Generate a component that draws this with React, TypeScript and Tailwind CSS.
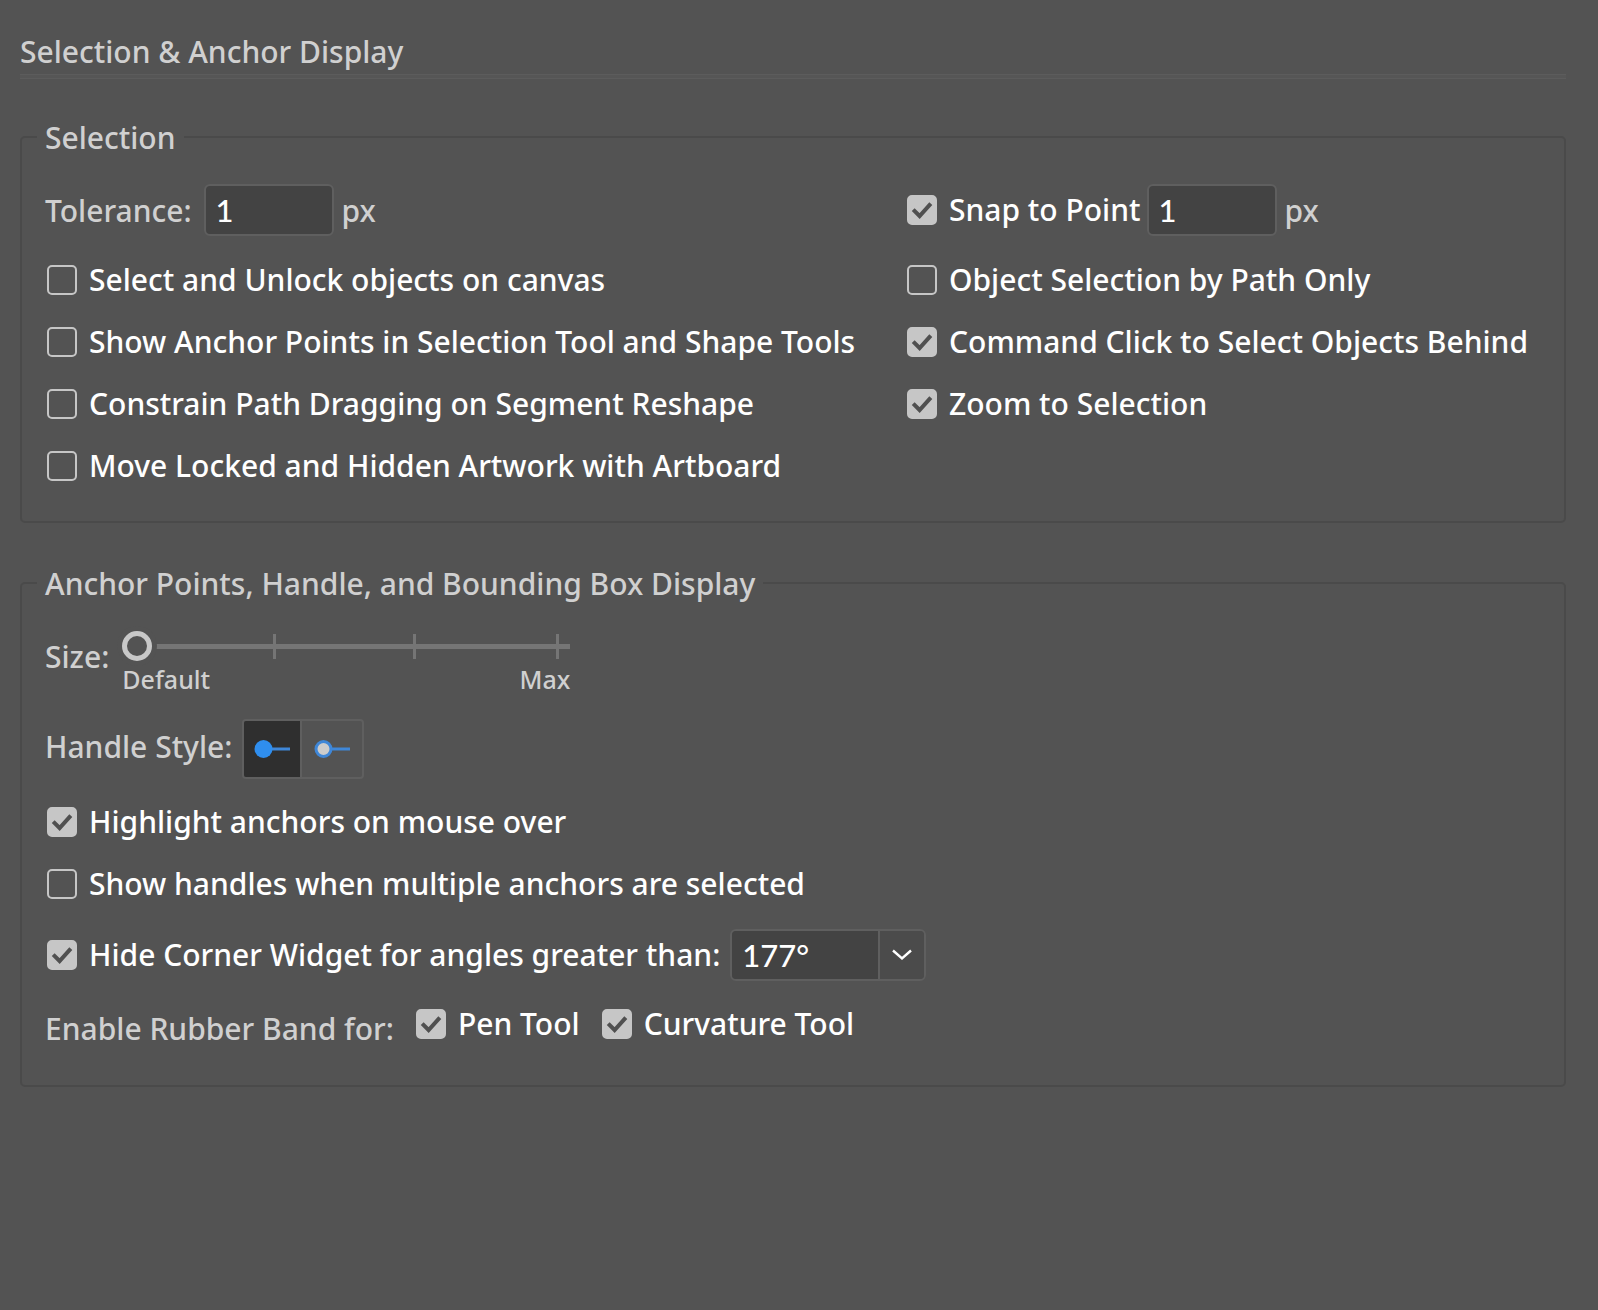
import { useState } from "react";
import type { ReactNode } from "react";

function Checkbox({ label, on = false }: { label: string; on?: boolean }) {
  const [checked, setChecked] = useState(on);
  return (
    <label className="flex h-[30px] items-center gap-3 whitespace-nowrap text-white">
      <span className="grid shrink-0">
        <input
          type="checkbox"
          checked={checked}
          onChange={(e) => setChecked(e.target.checked)}
          className="peer col-start-1 row-start-1 size-[30px] appearance-none rounded-[5px] border-2 border-[#c6c6c6] checked:bg-[#c6c6c6]"
        />
        <svg
          viewBox="0 0 30 30"
          className="pointer-events-none invisible col-start-1 row-start-1 size-[30px] peer-checked:visible"
          fill="none"
          stroke="#505050"
          strokeWidth="4"
        >
          <path d="M6.2 14.6 L12.6 21 L23.8 8.6" />
        </svg>
      </span>
      <span>{label}</span>
    </label>
  );
}

function Group({ title, children }: { title: string; children: ReactNode }) {
  return (
    <fieldset className="min-w-0 rounded-[5px] border-2 border-[#4a4a4a] pr-6 pl-[23px]">
      <legend className="-ml-2 px-2 pt-[2px] leading-10">{title}</legend>
      {children}
    </fieldset>
  );
}

function PixelField({ id, name }: { id: string; name?: string }) {
  return (
    <input
      id={id}
      type="text"
      defaultValue="1"
      aria-label={name}
      className="mr-2 h-[52px] w-[130px] rounded-[6px] border-2 border-[#5f5f5f] bg-[#434343] px-[10px] font-['Lato',sans-serif] text-[31px] text-white outline-none"
    />
  );
}

export default function App() {
  const [size, setSize] = useState(0);
  const [style, setStyle] = useState("solid");
  return (
    <main className="min-h-screen bg-[#535353] pt-8 pr-8 pl-5 font-['Noto_Sans',sans-serif] text-[30px] leading-10 font-medium text-[#d0d0d0]">
      <h1>Selection &amp; Anchor Display</h1>
      <div className="mt-[2px] h-[5px] border-y border-[#5c5c5c] bg-[#565656]" />

      <div className="mt-[37px]">
        <Group title="Selection">
          <div className="grid grid-cols-[860px_1fr] pt-[26px] pb-10">
            <div className="flex flex-col gap-8">
              <div className="-mb-[3px] flex h-[52px] items-center">
                <label htmlFor="tolerance" className="mr-3 pt-[2px]">
                  Tolerance:
                </label>
                <PixelField id="tolerance" />
                <span className="pt-[2px]">px</span>
              </div>
              <div className="flex flex-col gap-8 pl-[2px]">
                <Checkbox label="Select and Unlock objects on canvas" />
                <Checkbox label="Show Anchor Points in Selection Tool and Shape Tools" />
                <Checkbox label="Constrain Path Dragging on Segment Reshape" />
                <Checkbox label="Move Locked and Hidden Artwork with Artboard" />
              </div>
            </div>
            <div className="flex flex-col gap-8 pl-[2px]">
              <div className="-mb-[3px] flex h-[52px] items-center">
                <div className="mr-[6px]">
                  <Checkbox label="Snap to Point" on />
                </div>
                <PixelField id="snap" name="Snap to Point distance" />
                <span className="pt-[2px]">px</span>
              </div>
              <Checkbox label="Object Selection by Path Only" />
              <Checkbox label="Command Click to Select Objects Behind" on />
              <Checkbox label="Zoom to Selection" on />
            </div>
          </div>
        </Group>
      </div>

      <div className="mt-[39px]">
        <Group title="Anchor Points, Handle, and Bounding Box Display">
          <div className="flex flex-col pt-[27px] pb-9">
            <div className="flex items-start gap-[13px]">
              <label htmlFor="size" className="mt-[6px]">
                Size:
              </label>
              <div className="w-[448px]">
                <div className="relative h-[30px]">
                  <div className="absolute top-[13px] right-0 left-0 h-[5px] bg-[#757575]" />
                  <div className="absolute top-[3px] left-[151px] h-[25px] w-[3px] bg-[#757575]" />
                  <div className="absolute top-[3px] left-[291px] h-[25px] w-[3px] bg-[#757575]" />
                  <div className="absolute top-[3px] left-[434px] h-[25px] w-[3px] bg-[#757575]" />
                  <input
                    id="size"
                    type="range"
                    min={0}
                    max={3}
                    value={size}
                    onChange={(e) => setSize(Number(e.target.value))}
                    className="relative block h-[30px] w-full appearance-none bg-transparent [&::-webkit-slider-thumb]:size-[30px] [&::-webkit-slider-thumb]:appearance-none [&::-webkit-slider-thumb]:rounded-full [&::-webkit-slider-thumb]:border-[5px] [&::-webkit-slider-thumb]:border-[#c8c8c8] [&::-webkit-slider-thumb]:bg-[#535353] [&::-webkit-slider-thumb]:shadow-[0_0_0_5px_#535353]"
                  />
                </div>
                <div className="flex justify-between text-[25px] leading-9">
                  <span>Default</span>
                  <span>Max</span>
                </div>
              </div>
            </div>

            <div className="mt-[22px] flex items-center gap-[10px]">
              <span className="pb-1">Handle Style:</span>
              <div className="flex h-[60px] overflow-hidden rounded-[4px] border-2 border-[#5f5f5f]">
                <button
                  type="button"
                  aria-label="Solid handles"
                  aria-pressed={style === "solid"}
                  onClick={() => setStyle("solid")}
                  className="grid w-[58px] place-items-center border-r-2 border-[#5f5f5f] aria-pressed:bg-[#2f2f2f]"
                >
                  <svg viewBox="0 0 36 20" className="h-5 w-9">
                    <path d="M9 10 H36" stroke="#3f87d8" strokeWidth="3" />
                    <circle cx="9.5" cy="10" r="9" fill="#2f8eee" />
                  </svg>
                </button>
                <button
                  type="button"
                  aria-label="Hollow handles"
                  aria-pressed={style === "hollow"}
                  onClick={() => setStyle("hollow")}
                  className="grid w-[60px] place-items-center aria-pressed:bg-[#2f2f2f]"
                >
                  <svg viewBox="0 0 36 20" className="h-5 w-9">
                    <path d="M17 10 H36" stroke="#3f87d8" strokeWidth="3" />
                    <circle cx="9.5" cy="10" r="7.5" fill="#cccccc" stroke="#3f87d8" strokeWidth="3" />
                  </svg>
                </button>
              </div>
            </div>

            <div className="mt-7 flex flex-col gap-8 pl-[2px]">
              <Checkbox label="Highlight anchors on mouse over" on />
              <Checkbox label="Show handles when multiple anchors are selected" />
            </div>
            <div className="mt-[30px] flex h-[52px] items-center gap-[10px] pl-[2px]">
              <Checkbox label="Hide Corner Widget for angles greater than:" on />
              <div className="flex h-[52px] overflow-hidden rounded-[6px] border-2 border-[#5f5f5f]">
                <input
                  type="text"
                  defaultValue="177°"
                  aria-label="Corner widget angle"
                  className="w-[146px] bg-[#434343] px-[10px] font-['Lato',sans-serif] text-[31px] text-white outline-none"
                />
                <button
                  type="button"
                  aria-label="Choose angle"
                  className="grid w-[46px] place-items-center border-l-2 border-[#5f5f5f] bg-[#4b4b4b]"
                >
                  <svg viewBox="0 0 20 12" className="h-3 w-5" fill="none" stroke="#ffffff" strokeWidth="2.4">
                    <path d="M1 1.5 L10 9.5 L19 1.5" />
                  </svg>
                </button>
              </div>
            </div>
            <div className="mt-7 flex items-start gap-[22px]">
              <span>Enable Rubber Band for:</span>
              <Checkbox label="Pen Tool" on />
              <Checkbox label="Curvature Tool" on />
            </div>
          </div>
        </Group>
      </div>
    </main>
  );
}
